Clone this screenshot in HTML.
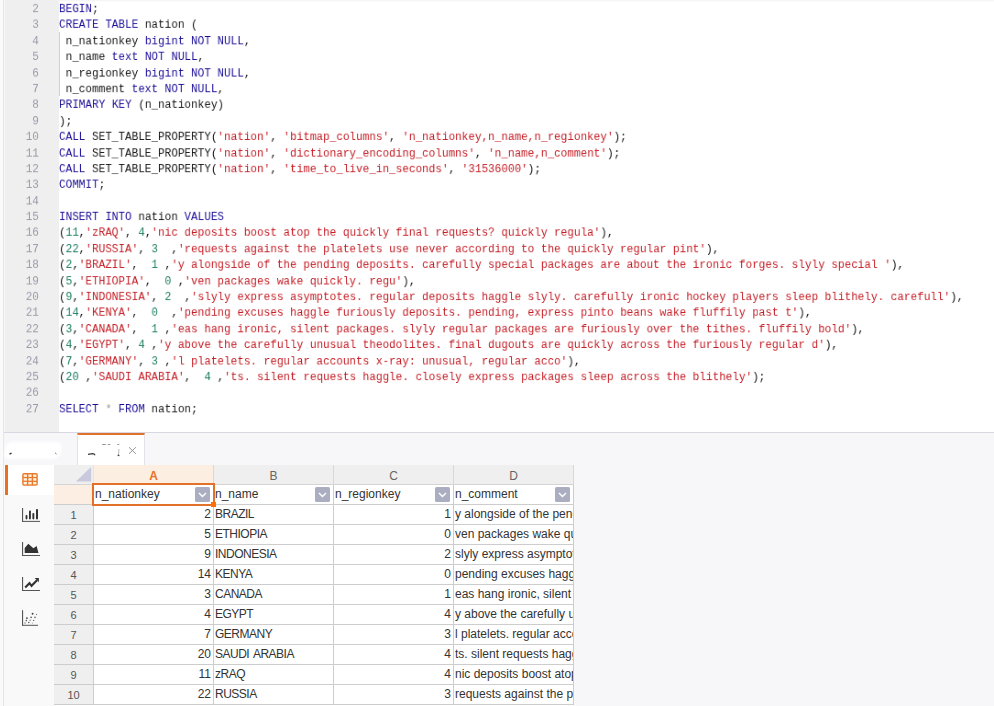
<!DOCTYPE html>
<html><head><meta charset="utf-8">
<style>
*{box-sizing:border-box;margin:0;padding:0}
html,body{width:994px;height:706px;overflow:hidden;background:#fff}
body{position:relative;font-family:"Liberation Sans",sans-serif}
.a{position:absolute}
#lb{left:3px;top:0;width:1px;height:706px;background:#e6e6e6}
#top{left:59px;top:0;width:935px;height:2px;background:linear-gradient(#f2f2f2,#fff)}
#lb2{left:0;top:0;width:3px;height:706px;background:#fafafa}
#gutter{left:4px;top:0;width:55px;height:432px;background:#efefef;border-left:1px solid #f8f8f8;overflow:hidden}
#gl{position:absolute;top:1.5px;left:-1px;width:55px;transform:scale(1,0.92);transform-origin:0 0;will-change:transform}
#gl>div{height:17.3913px;line-height:17.3913px;text-align:right;padding-right:22px;font-family:"Liberation Mono",monospace;font-size:12px;color:#9a9aaa;transform:scaleX(0.91667);transform-origin:100% 0}
#code{left:59px;top:0;width:935px;height:432px;overflow:hidden}
#cl{position:absolute;top:1.5px;left:0;transform:scale(0.91667,0.92);transform-origin:0 0;will-change:transform}
.l{height:17.3913px;line-height:17.3913px;white-space:pre;font-family:"Liberation Mono",monospace;font-size:12px;color:#151515}
.k{color:#1a0e96}.s{color:#c41d25}.n{color:#1b7d62}.o{color:#999}
#guide{left:59px;top:32px;width:1px;height:64px;background:#d0d0d0}
#eb{left:4px;top:432px;width:990px;height:1px;background:#d8d8e2}
#tabbar{left:4px;top:433px;width:990px;height:32px;background:#f7f7fa}
#tab{left:77px;top:433px;width:68px;height:32px;background:#fff;border-left:1px solid #e2e2e8;border-right:1px solid #e2e2e8;border-top:2px solid #e0722e}
#blob{left:5px;top:441.5px;width:56px;height:16.5px;background:#fff;border-radius:6px;filter:blur(0.8px);transform:skewX(-12deg)}
#side{left:4px;top:465px;width:50px;height:241px;background:#f9f9f9}
#sact{left:4px;top:465px;width:50px;height:30px;background:#fff}
#sbar{left:5px;top:465px;width:3px;height:30px;background:#e8701f}
#right{left:573px;top:465px;width:421px;height:241px;background:#f7f7fa}
#grid{left:54px;top:465px;width:520px;height:241px}
.hdr{position:absolute;top:0;height:20px;line-height:23px;text-align:center;font-size:12px;color:#666;background:#efefef;border-right:1px solid #d8d8d8;border-bottom:1px solid #d4d4d4}
.row{position:absolute;left:0;width:520px;height:20px}
.rh{position:absolute;left:0;top:0;width:40px;height:20px;line-height:20px;text-align:center;background:#efefef;color:#555;font-size:11px;border-right:1px solid #cdcdcd;border-bottom:1px solid #cdcdcd}
.c{position:absolute;top:0;height:20px;line-height:18px;font-size:12px;color:#333;white-space:nowrap;overflow:hidden;border-right:1px solid #cdcdcd;border-bottom:1px solid #cdcdcd;padding:0 1px;background:#fff}
.fr .c{line-height:19px;padding-left:1px;font-size:12px}
.row .cb{letter-spacing:-0.5px;word-spacing:1.6px}
.row .cd{font-size:12px}
.fr .cb{letter-spacing:0}
.r{text-align:right;padding-right:2px}
.ca{left:40px;width:120px}.cb{left:160px;width:120px}.cc{left:280px;width:120px}.cd{left:400px;width:120px}
.dd{position:absolute;right:3px;top:2px;width:15px;height:15px;background:#abaec0;border-radius:1.5px}
.dd svg{display:block}
#sel{left:92px;top:483px;width:123px;height:23px;border:2px solid #e2712a}
#fh{left:211px;top:502px;width:5px;height:5px;background:#ff7000}
</style></head><body>
<div id="top" class="a"></div><div id="lb2" class="a"></div><div id="lb" class="a"></div>
<div id="gutter" class="a"><div id="gl"><div>2</div><div>3</div><div>4</div><div>5</div><div>6</div><div>7</div><div>8</div><div>9</div><div>10</div><div>11</div><div>12</div><div>13</div><div>14</div><div>15</div><div>16</div><div>17</div><div>18</div><div>19</div><div>20</div><div>21</div><div>22</div><div>23</div><div>24</div><div>25</div><div>26</div><div>27</div></div></div>
<div id="code" class="a"><div id="cl"><div class="l"><span class="k">BEGIN</span>;</div><div class="l"><span class="k">CREATE</span> <span class="k">TABLE</span> nation (</div><div class="l"> n_nationkey <span class="k">bigint</span> <span class="k">NOT</span> <span class="k">NULL</span>,</div><div class="l"> n_name <span class="k">text</span> <span class="k">NOT</span> <span class="k">NULL</span>,</div><div class="l"> n_regionkey <span class="k">bigint</span> <span class="k">NOT</span> <span class="k">NULL</span>,</div><div class="l"> n_comment <span class="k">text</span> <span class="k">NOT</span> <span class="k">NULL</span>,</div><div class="l"><span class="k">PRIMARY</span> <span class="k">KEY</span> (n_nationkey)</div><div class="l">);</div><div class="l"><span class="k">CALL</span> SET_TABLE_PROPERTY(<span class="s">&#x27;nation&#x27;</span>, <span class="s">&#x27;bitmap_columns&#x27;</span>, <span class="s">&#x27;n_nationkey,n_name,n_regionkey&#x27;</span>);</div><div class="l"><span class="k">CALL</span> SET_TABLE_PROPERTY(<span class="s">&#x27;nation&#x27;</span>, <span class="s">&#x27;dictionary_encoding_columns&#x27;</span>, <span class="s">&#x27;n_name,n_comment&#x27;</span>);</div><div class="l"><span class="k">CALL</span> SET_TABLE_PROPERTY(<span class="s">&#x27;nation&#x27;</span>, <span class="s">&#x27;time_to_live_in_seconds&#x27;</span>, <span class="s">&#x27;31536000&#x27;</span>);</div><div class="l"><span class="k">COMMIT</span>;</div><div class="l">&nbsp;</div><div class="l"><span class="k">INSERT</span> <span class="k">INTO</span> nation <span class="k">VALUES</span></div><div class="l">(<span class="n">11</span>,<span class="s">&#x27;zRAQ&#x27;</span>, <span class="n">4</span>,<span class="s">&#x27;nic deposits boost atop the quickly final requests? quickly regula&#x27;</span>),</div><div class="l">(<span class="n">22</span>,<span class="s">&#x27;RUSSIA&#x27;</span>, <span class="n">3</span>  ,<span class="s">&#x27;requests against the platelets use never according to the quickly regular pint&#x27;</span>),</div><div class="l">(<span class="n">2</span>,<span class="s">&#x27;BRAZIL&#x27;</span>,  <span class="n">1</span> ,<span class="s">&#x27;y alongside of the pending deposits. carefully special packages are about the ironic forges. slyly special &#x27;</span>),</div><div class="l">(<span class="n">5</span>,<span class="s">&#x27;ETHIOPIA&#x27;</span>,  <span class="n">0</span> ,<span class="s">&#x27;ven packages wake quickly. regu&#x27;</span>),</div><div class="l">(<span class="n">9</span>,<span class="s">&#x27;INDONESIA&#x27;</span>, <span class="n">2</span>  ,<span class="s">&#x27;slyly express asymptotes. regular deposits haggle slyly. carefully ironic hockey players sleep blithely. carefull&#x27;</span>),</div><div class="l">(<span class="n">14</span>,<span class="s">&#x27;KENYA&#x27;</span>,  <span class="n">0</span>  ,<span class="s">&#x27;pending excuses haggle furiously deposits. pending, express pinto beans wake fluffily past t&#x27;</span>),</div><div class="l">(<span class="n">3</span>,<span class="s">&#x27;CANADA&#x27;</span>,  <span class="n">1</span> ,<span class="s">&#x27;eas hang ironic, silent packages. slyly regular packages are furiously over the tithes. fluffily bold&#x27;</span>),</div><div class="l">(<span class="n">4</span>,<span class="s">&#x27;EGYPT&#x27;</span>, <span class="n">4</span> ,<span class="s">&#x27;y above the carefully unusual theodolites. final dugouts are quickly across the furiously regular d&#x27;</span>),</div><div class="l">(<span class="n">7</span>,<span class="s">&#x27;GERMANY&#x27;</span>, <span class="n">3</span> ,<span class="s">&#x27;l platelets. regular accounts x-ray: unusual, regular acco&#x27;</span>),</div><div class="l">(<span class="n">20</span> ,<span class="s">&#x27;SAUDI ARABIA&#x27;</span>,  <span class="n">4</span> ,<span class="s">&#x27;ts. silent requests haggle. closely express packages sleep across the blithely&#x27;</span>);</div><div class="l">&nbsp;</div><div class="l"><span class="k">SELECT</span> <span class="o">*</span> <span class="k">FROM</span> nation;</div></div></div>
<div id="guide" class="a"></div>
<div id="eb" class="a"></div>
<div id="tabbar" class="a"></div>
<div id="tab" class="a"></div>
<div id="blob" class="a"></div>
<svg class="a" style="left:0;top:433px" width="160" height="32" viewBox="0 433 160 32">
  <path d="M9.5 454.2 L11.5 453.2" stroke="#333" stroke-width="1.3" fill="none"/>
  <path d="M55 452.8 L56.5 454" stroke="#777" stroke-width="1" fill="none"/>
  <path d="M88 454.4 L92.6 453.7 Q94.4 453.7 95 455.3" stroke="#3a3a3a" stroke-width="1.25" fill="none"/>
  <path d="M102.2 444.5 H105.8 M107.7 444.5 H110.3 M117.3 444.5 H119.3" stroke="#8a8a8a" stroke-width="0.9" fill="none"/>
  <path d="M118.9 449 L118.5 455" stroke="#9a9a9a" stroke-width="0.7" fill="none"/>
  <rect x="117.6" y="454.8" width="1.8" height="1.3" fill="#444"/>
  <path d="M129 447.3 L135.8 453.8 M135.8 447.3 L129 453.8" stroke="#8a8a8a" stroke-width="0.9" fill="none"/>
</svg>
<div id="side" class="a"></div>
<div id="sact" class="a"></div>
<div id="sbar" class="a"></div>
<svg class="a" style="left:0;top:465px" width="54" height="241" viewBox="0 465 54 241">
  <!-- table -->
  <rect x="22.2" y="473.1" width="15.6" height="12.6" rx="1.6" fill="#e9782b"/>
  <g fill="#fff4e2"><rect x="23.63" y="474.45" width="3.3" height="2.45"/><rect x="28.35" y="474.45" width="3.3" height="2.45"/><rect x="33.08" y="474.45" width="3.3" height="2.45"/><rect x="23.63" y="478.20" width="3.3" height="2.45"/><rect x="28.35" y="478.20" width="3.3" height="2.45"/><rect x="33.08" y="478.20" width="3.3" height="2.45"/><rect x="23.63" y="481.95" width="3.3" height="2.45"/><rect x="28.35" y="481.95" width="3.3" height="2.45"/><rect x="33.08" y="481.95" width="3.3" height="2.45"/></g>
  <!-- bar -->
  <g fill="#555"><rect x="22" y="508" width="1.1" height="13.8"/><rect x="22" y="520.9" width="18" height="1"/></g>
  <g fill="#333"><rect x="25.6" y="515" width="1.8" height="4.4" rx="0.8"/><rect x="29" y="510.5" width="1.9" height="8.9" rx="0.8"/><rect x="32.4" y="513" width="1.9" height="6.4" rx="0.8"/><rect x="36" y="509.1" width="2" height="10.3" rx="0.8"/></g>
  <!-- area -->
  <g fill="#555"><rect x="22" y="542" width="1.1" height="13.9"/><rect x="22" y="555" width="18" height="1"/></g>
  <path d="M24.7 552.9 V548.1 L28.3 543.8 L33.4 548.3 L36.6 545.9 L38.5 552.9 Z" fill="#333"/>
  <!-- line -->
  <g fill="#555"><rect x="22" y="577" width="1.1" height="13.7"/><rect x="22" y="590" width="18" height="1"/></g>
  <path d="M25.2 587.6 L29.5 583.2 L31.5 585.8 L37 580.2" stroke="#333" stroke-width="2.1" fill="none" stroke-linejoin="miter"/>
  <path d="M34.6 578 H38.9 V582.3 Z" fill="#333"/>
  <!-- scatter -->
  <g fill="#555"><rect x="22" y="610.2" width="1.1" height="15.3"/><rect x="22" y="624.8" width="16" height="1"/></g>
  <g fill="#444">
    <circle cx="32.6" cy="613.8" r="0.95"/><circle cx="36.5" cy="614.4" r="0.6" fill="#777"/>
    <circle cx="26.9" cy="618.1" r="0.95"/><circle cx="31.1" cy="617.4" r="0.8" fill="#555"/><circle cx="35" cy="617.4" r="0.8" fill="#666"/>
    <circle cx="26.3" cy="620.6" r="0.8" fill="#555"/><circle cx="30.1" cy="620.2" r="0.8" fill="#888"/><circle cx="33.7" cy="620.4" r="0.7" fill="#666"/>
    <circle cx="25" cy="623" r="0.8" fill="#888"/><circle cx="28.8" cy="622.5" r="0.8" fill="#666"/><circle cx="32.4" cy="623" r="0.6" fill="#999"/>
  </g>
</svg>
<div id="right" class="a"></div>
<div id="grid" class="a">
  <div class="hdr" style="left:0;width:40px;border-right-color:#e4e4e4"></div>
  <svg class="a" style="left:21px;top:0px" width="18" height="17" viewBox="0 0 18 17"><path d="M0.9 16.6 L16.1 1.9 V16.6 Z" fill="#c9c9dd"/></svg>
  <div class="hdr" style="left:40px;width:120px;background:#fdeee2;color:#e8701f;font-weight:bold">A</div>
  <div class="hdr" style="left:160px;width:120px">B</div>
  <div class="hdr" style="left:280px;width:120px">C</div>
  <div class="hdr" style="left:400px;width:120px">D</div>
  <div class="row fr" style="top:20px">
    <div class="rh" style="background:#fdeee3"></div>
    <div class="c ca">n_nationkey<span class="dd"><svg width="15" height="15" viewBox="0 0 15 15"><path d="M4 6 L7.5 9.5 L11 6" fill="none" stroke="#fff" stroke-width="1.4"/></svg></span></div>
    <div class="c cb">n_name<span class="dd"><svg width="15" height="15" viewBox="0 0 15 15"><path d="M4 6 L7.5 9.5 L11 6" fill="none" stroke="#fff" stroke-width="1.4"/></svg></span></div>
    <div class="c cc">n_regionkey<span class="dd"><svg width="15" height="15" viewBox="0 0 15 15"><path d="M4 6 L7.5 9.5 L11 6" fill="none" stroke="#fff" stroke-width="1.4"/></svg></span></div>
    <div class="c cd">n_comment<span class="dd"><svg width="15" height="15" viewBox="0 0 15 15"><path d="M4 6 L7.5 9.5 L11 6" fill="none" stroke="#fff" stroke-width="1.4"/></svg></span></div>
  </div>
  <div class="row" style="top:40px"><div class="rh">1</div><div class="c ca r">2</div><div class="c cb">BRAZIL</div><div class="c cc r">1</div><div class="c cd">y alongside of the pending deposits. carefully special packages are about the ironic forges. slyly special </div></div><div class="row" style="top:60px"><div class="rh">2</div><div class="c ca r">5</div><div class="c cb">ETHIOPIA</div><div class="c cc r">0</div><div class="c cd">ven packages wake quickly. regu</div></div><div class="row" style="top:80px"><div class="rh">3</div><div class="c ca r">9</div><div class="c cb">INDONESIA</div><div class="c cc r">2</div><div class="c cd">slyly express asymptotes. regular deposits haggle slyly. carefully ironic hockey players sleep blithely. carefull</div></div><div class="row" style="top:100px"><div class="rh">4</div><div class="c ca r">14</div><div class="c cb">KENYA</div><div class="c cc r">0</div><div class="c cd">pending excuses haggle furiously deposits. pending, express pinto beans wake fluffily past t</div></div><div class="row" style="top:120px"><div class="rh">5</div><div class="c ca r">3</div><div class="c cb">CANADA</div><div class="c cc r">1</div><div class="c cd">eas hang ironic, silent packages. slyly regular packages are furiously over the tithes. fluffily bold</div></div><div class="row" style="top:140px"><div class="rh">6</div><div class="c ca r">4</div><div class="c cb">EGYPT</div><div class="c cc r">4</div><div class="c cd">y above the carefully unusual theodolites. final dugouts are quickly across the furiously regular d</div></div><div class="row" style="top:160px"><div class="rh">7</div><div class="c ca r">7</div><div class="c cb">GERMANY</div><div class="c cc r">3</div><div class="c cd">l platelets. regular accounts x-ray: unusual, regular acco</div></div><div class="row" style="top:180px"><div class="rh">8</div><div class="c ca r">20</div><div class="c cb">SAUDI ARABIA</div><div class="c cc r">4</div><div class="c cd">ts. silent requests haggle. closely express packages sleep across the blithely</div></div><div class="row" style="top:200px"><div class="rh">9</div><div class="c ca r">11</div><div class="c cb">zRAQ</div><div class="c cc r">4</div><div class="c cd">nic deposits boost atop the quickly final requests? quickly regula</div></div><div class="row" style="top:220px"><div class="rh">10</div><div class="c ca r">22</div><div class="c cb">RUSSIA</div><div class="c cc r">3</div><div class="c cd">requests against the platelets use never according to the quickly regular pint</div></div>
</div>
<div id="sel" class="a"></div>
<div id="fh" class="a"></div>
</body></html>
